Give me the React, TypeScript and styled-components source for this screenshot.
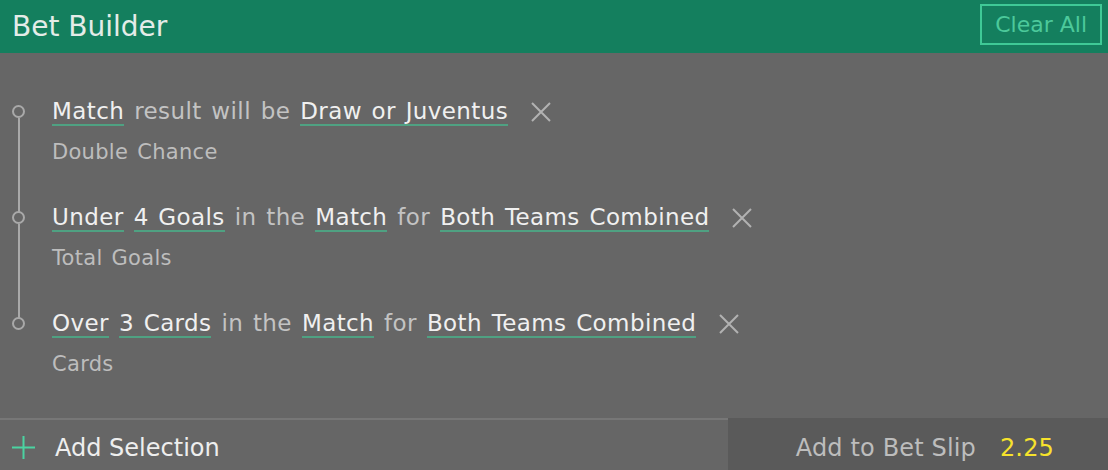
import styled, { createGlobalStyle } from "styled-components";

const GlobalStyle = createGlobalStyle`
  html, body {
    margin: 0;
    padding: 0;
    background: #666666;
  }
  body {
    font-family: "DejaVu Sans", Verdana, sans-serif;
  }
`;

interface Part {
  text: string;
  token?: boolean;
}

interface Selection {
  id: number;
  parts: Part[];
  market: string;
}

const selections: Selection[] = [
  {
    id: 1,
    parts: [
      { text: "Match", token: true },
      { text: "result will be" },
      { text: "Draw or Juventus", token: true },
    ],
    market: "Double Chance",
  },
  {
    id: 2,
    parts: [
      { text: "Under", token: true },
      { text: "4 Goals", token: true },
      { text: "in the" },
      { text: "Match", token: true },
      { text: "for" },
      { text: "Both Teams Combined", token: true },
    ],
    market: "Total Goals",
  },
  {
    id: 3,
    parts: [
      { text: "Over", token: true },
      { text: "3 Cards", token: true },
      { text: "in the" },
      { text: "Match", token: true },
      { text: "for" },
      { text: "Both Teams Combined", token: true },
    ],
    market: "Cards",
  },
];

const Panel = styled.div`
  width: 1108px;
  height: 470px;
  display: flex;
  flex-direction: column;
  background: #666666;
  overflow: hidden;
`;

const Header = styled.header`
  height: 53px;
  flex-shrink: 0;
  display: flex;
  align-items: center;
  justify-content: space-between;
  padding: 0 6px 0 12px;
  background: #147f5e;
  box-sizing: border-box;
`;

const Title = styled.h1`
  margin: 0;
  font-size: 28px;
  font-weight: 400;
  color: #e4ece8;
`;

const ClearButton = styled.button`
  height: 41px;
  padding: 0 13px;
  margin-bottom: 5px;
  background: transparent;
  border: 2px solid #3fc996;
  color: #4cc99b;
  font-family: inherit;
  font-size: 22px;
  cursor: pointer;
`;

const Body = styled.div`
  flex: 1;
  padding-top: 42px;
  display: flex;
  flex-direction: column;
  gap: 35px;
`;

const Item = styled.div<{ $last: boolean }>`
  position: relative;
  padding-left: 52px;

  &::before {
    content: "";
    position: absolute;
    left: 12px;
    top: 10px;
    width: 9px;
    height: 9px;
    border: 2px solid #a9a9a9;
    border-radius: 50%;
  }

  &::after {
    content: "";
    display: ${(p) => (p.$last ? "none" : "block")};
    position: absolute;
    left: 18px;
    top: 23px;
    width: 2px;
    height: 94px;
    background: #a9a9a9;
  }
`;

const Line = styled.div`
  height: 34px;
  display: flex;
  align-items: center;
  gap: 10px;
  font-size: 23px;
  letter-spacing: 0.4px;
  word-spacing: 2px;
`;

const Token = styled.span`
  display: inline-block;
  line-height: 26px;
  color: #f0f0f0;
  border-bottom: 2px solid #4fa182;
  white-space: nowrap;
`;

const Plain = styled.span`
  line-height: 26px;
  color: #c3c3c3;
  border-bottom: 2px solid transparent;
  white-space: nowrap;
`;

const Remove = styled.button`
  margin-left: 12px;
  width: 22px;
  height: 22px;
  padding: 0;
  border: none;
  background: transparent;
  display: flex;
  align-items: center;
  justify-content: center;
  cursor: pointer;
`;

const Market = styled.div`
  margin-top: 9px;
  line-height: 28px;
  font-size: 21px;
  letter-spacing: 0.3px;
  word-spacing: 2px;
  color: #bdbdbd;
`;

const Footer = styled.footer`
  height: 52px;
  flex-shrink: 0;
  display: flex;
  border-top: 2px solid #777777;
  box-sizing: border-box;
`;

const AddSelection = styled.button`
  flex: 1;
  display: flex;
  align-items: center;
  gap: 20px;
  padding: 5px 0 0 12px;
  background: transparent;
  border: none;
  color: #eeeeee;
  font-family: inherit;
  font-size: 24px;
  cursor: pointer;
`;

const AddToSlip = styled.button`
  width: 380px;
  margin-top: -2px;
  display: flex;
  align-items: center;
  justify-content: flex-end;
  gap: 24px;
  padding: 7px 54px 0 0;
  background: #5a5a5a;
  border: none;
  color: #bdbdbd;
  font-family: inherit;
  font-size: 24px;
  letter-spacing: 0.15px;
  cursor: pointer;
`;

const Odds = styled.span`
  color: #f7e22c;
`;

const CrossIcon = () => (
  <svg width="20" height="20" viewBox="0 0 20 20">
    <path d="M1 1L19 19M19 1L1 19" stroke="#b2b2b2" strokeWidth="2" />
  </svg>
);

const PlusIcon = () => (
  <svg width="23" height="23" viewBox="0 0 23 23">
    <path d="M11.5 0V23M0 11.5H23" stroke="#4bd3a1" strokeWidth="2" />
  </svg>
);

export default function App() {
  return (
    <>
      <GlobalStyle />
      <Panel>
        <Header>
          <Title>Bet Builder</Title>
          <ClearButton>Clear All</ClearButton>
        </Header>

        <Body>
          {selections.map((sel, index) => (
            <Item key={sel.id} $last={index === selections.length - 1}>
              <Line>
                {sel.parts.map((part, i) =>
                  part.token ? (
                    <Token key={i}>{part.text}</Token>
                  ) : (
                    <Plain key={i}>{part.text}</Plain>
                  )
                )}
                <Remove aria-label="Remove selection">
                  <CrossIcon />
                </Remove>
              </Line>
              <Market>{sel.market}</Market>
            </Item>
          ))}
        </Body>

        <Footer>
          <AddSelection>
            <PlusIcon />
            Add Selection
          </AddSelection>
          <AddToSlip>
            Add to Bet Slip
            <Odds>2.25</Odds>
          </AddToSlip>
        </Footer>
      </Panel>
    </>
  );
}
